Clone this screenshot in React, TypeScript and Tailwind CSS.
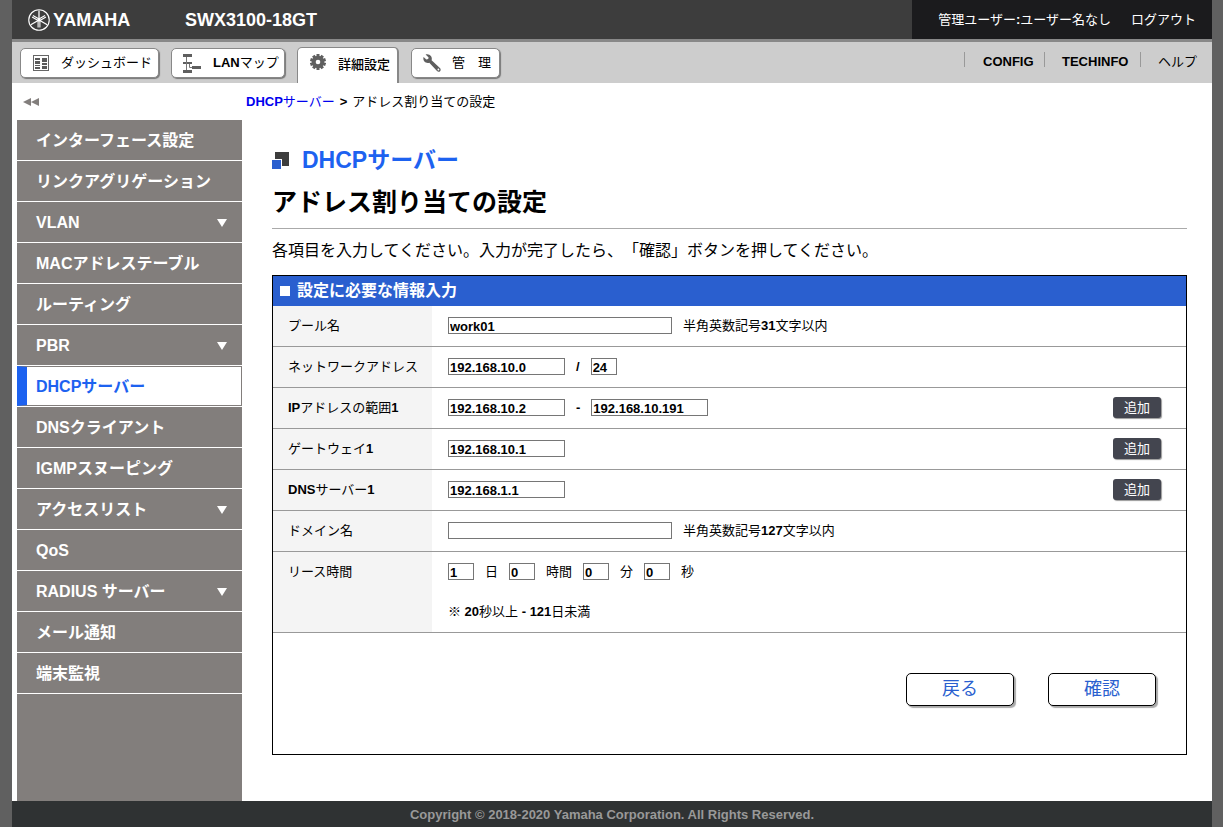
import type { ReactNode } from "react";

const menu = [
  { label: "インターフェース設定" },
  { label: "リンクアグリゲーション" },
  { label: "VLAN", sub: true },
  { label: "MACアドレステーブル" },
  { label: "ルーティング" },
  { label: "PBR", sub: true },
  { label: "DHCPサーバー", active: true },
  { label: "DNSクライアント" },
  { label: "IGMPスヌーピング" },
  { label: "アクセスリスト", sub: true },
  { label: "QoS" },
  { label: "RADIUS サーバー", sub: true },
  { label: "メール通知" },
  { label: "端末監視" },
];

function LogoMark() {
  return (
    <svg viewBox="0 0 44 44" className="size-[22px]" fill="none" stroke="#fff" aria-hidden="true">
      <circle cx="22" cy="22" r="20.5" strokeWidth="2.2" />
      {[0, 120, 240].map((angle) => (
        <g key={angle} transform={`rotate(${angle} 22 22)`}>
          <path d="M22 3v19" strokeWidth="2.6" />
          <path d="M20.2 22v15M23.8 22v15" strokeWidth="2.2" />
        </g>
      ))}
      <circle cx="22" cy="22" r="3.2" fill="#fff" stroke="none" />
    </svg>
  );
}

function DashboardIcon() {
  return (
    <svg viewBox="0 0 16 16" className="size-4" aria-hidden="true">
      <rect x="0.5" y="0.5" width="15" height="15" fill="#fff" stroke="#666" />
      <path
        fill="#5a5a5a"
        d="M2 3h5v2H2zM2 6h5v3H2zM2 10h5v1H2zM2 12h5v2H2zM9 3h5v4H9zM9 8h5v2H9zM9 11h5v3H9z"
      />
    </svg>
  );
}

function LanMapIcon() {
  return (
    <svg viewBox="0 0 18 19" className="h-[19px] w-[18px]" aria-hidden="true">
      <path fill="#5f5f5f" d="M0 0h9v3H0zM0 8h9v2H0zM0 16h9v3H0zM9 12h9v3H9z" />
      <path d="M3.5 3v13M6.5 10v3.5H9" fill="none" stroke="#777" />
    </svg>
  );
}

function GearIcon() {
  return (
    <svg viewBox="0 0 16 16" className="mb-[5px] size-4" aria-hidden="true">
      {[0, 36, 72, 108, 144].map((angle) => (
        <rect
          key={angle}
          x="6.5"
          width="3"
          height="16"
          fill="#5f5f5f"
          transform={`rotate(${angle} 8 8)`}
        />
      ))}
      <circle cx="8" cy="8" r="6.2" fill="#5f5f5f" />
      <circle cx="8" cy="8" r="2.3" fill="#fff" />
    </svg>
  );
}

function WrenchIcon() {
  return (
    <svg viewBox="0 0 18 18" className="size-[18px]" aria-hidden="true">
      <path
        fill="#5f5f5f"
        d="M2.600.6C4.500-.1 7 .6 8.100 2.300c.8 1.300.9 2.700.5 3.900l8.300 7.900c1 1 1 2.300.2 3.100s-2.200.8-3.100-.2L6.300 8.700C4.400 9.300 2.400 8.700 1.200 7.200.3 6 .1 4.400.6 2.900l2.700 2.700 1.900-.6.4-1.600z"
      />
      <circle cx="15.400" cy="15.500" r="0.9" fill="#fff" />
    </svg>
  );
}

const tabBase = "flex items-center border-[#888] bg-white whitespace-nowrap";
const tabBox = "mb-[5px] h-[30px] rounded-[5px] border shadow-[1px_1px_1px_#777]";

function Tab({ icon, className, children }: { icon: ReactNode; className: string; children: ReactNode }) {
  return (
    <a href="#" className={`${tabBase} ${className}`}>
      {icon}
      <span>{children}</span>
    </a>
  );
}

function Header() {
  return (
    <header className="flex h-[42px] justify-between border-b-[3px] border-[#888] bg-[#3d3d3d] text-white">
      <div className="flex items-center pl-4">
        <a href="#" className="flex w-[157px] items-center gap-[3px]">
          <LogoMark />
          <span className="text-lg font-bold">YAMAHA</span>
        </a>
        <span className="text-lg font-bold">SWX3100-18GT</span>
      </div>
      <div className="flex items-center gap-5 bg-[#1b1b1d] pr-4 pl-[26px] whitespace-nowrap">
        <span>
          管理ユーザー<b>:</b>ユーザー名なし
        </span>
        <a href="#">ログアウト</a>
      </div>
    </header>
  );
}

function TabBar() {
  return (
    <nav className="flex h-[41px] justify-between bg-[#cdcdcd]">
      <div className="flex items-end gap-3 pl-2">
        <Tab icon={<DashboardIcon />} className={`${tabBox} w-[139px] gap-3 pl-3`}>
          ダッシュボード
        </Tab>
        <Tab icon={<LanMapIcon />} className={`${tabBox} w-[114px] gap-3 pl-[11px]`}>
          <b>LAN</b>マップ
        </Tab>
        <Tab
          icon={<GearIcon />}
          className="h-9 w-[102px] gap-3 rounded-t-[5px] border-t border-r-2 border-l pb-[2px] pl-3 font-medium"
        >
          詳細設定
        </Tab>
        <Tab icon={<WrenchIcon />} className={`${tabBox} w-[89px] gap-[11px] pl-[11px]`}>
          管　理
        </Tab>
      </div>
      <ul className="mt-[10px] flex h-[15px] font-bold">
        <li className="flex w-20 border-l border-[#999] pl-[18px]">
          <a href="#">CONFIG</a>
        </li>
        <li className="flex w-24 border-l border-[#999] pl-[17px]">
          <a href="#">TECHINFO</a>
        </li>
        <li className="flex w-[72px] border-l border-[#999] pl-[17px] font-normal">
          <a href="#">ヘルプ</a>
        </li>
      </ul>
    </nav>
  );
}

function Sidebar() {
  return (
    <aside className="flex w-[230px] shrink-0 flex-col pl-[5px]">
      <button type="button" aria-label="メニューを閉じる" className="flex h-[37px] items-center pl-[6px]">
        <svg viewBox="0 0 16 8" className="h-2 w-4" fill="#827e7c" aria-hidden="true">
          <path d="M8 0v8L0 4zM16 0v8L8 4z" />
        </svg>
      </button>
      <ul className="grow bg-[#827e7c] text-base font-bold text-white">
        {menu.map((item) => (
          <li key={item.label} className="border-b border-white">
            <a
              href="#"
              className={
                item.active
                  ? "flex h-10 items-center border border-l-[10px] border-[#827e7c] border-l-[#1d62f0] bg-white pt-[2px] pl-[9px] text-[#1d62f0]"
                  : "flex h-10 items-center justify-between pt-[2px] pr-[15px] pl-[19px]"
              }
            >
              {item.label}
              {item.sub && (
                <svg viewBox="0 0 10 8" className="h-2 w-[10px]" fill="#fff" aria-hidden="true">
                  <path d="M0 0h10L5 8z" />
                </svg>
              )}
            </a>
          </li>
        ))}
      </ul>
    </aside>
  );
}

function Field({ id, value, label, size = "w-[117px]" }: { id: string; value: string; label?: string; size?: string }) {
  return (
    <input
      id={id}
      type="text"
      defaultValue={value}
      aria-label={label}
      className={`${size} h-[17px] border border-[#767676] bg-white pt-[2px] pl-px font-bold`}
    />
  );
}

type RowProps = { id: string; label: ReactNode; add?: boolean; note?: ReactNode; children: ReactNode };

function Row({ id, label, add, note, children }: RowProps) {
  return (
    <tr className="border-b border-[#999] align-top">
      <th scope="row" className="w-[159px] bg-[#f4f4f4] pl-[15px] text-left font-normal">
        <label htmlFor={id} className="flex h-10 items-center">
          <span>{label}</span>
        </label>
      </th>
      <td className="pl-4">
        <div className="flex h-10 items-center gap-[11px] pb-px">{children}</div>
        {note && <p className="h-10 pt-[10px]">{note}</p>}
      </td>
      <td className="w-[73px]">
        {add && (
          <div className="flex h-10 items-center pb-px">
            <button
              type="button"
              className="h-[21px] w-12 rounded-[3px] bg-[#43454f] text-white shadow-[1px_1px_1px_#999]"
            >
              追加
            </button>
          </div>
        )}
      </td>
    </tr>
  );
}

const actionButton =
  "h-[33px] w-[108px] rounded-[5px] border border-black bg-white pb-[2px] text-lg text-[#2a5fcf] shadow-[2px_2px_1px_#aaa]";

function SettingsForm() {
  return (
    <form className="mt-3 border border-black" onSubmit={(e) => e.preventDefault()}>
      <h3 className="flex h-[30px] items-center gap-[7px] bg-[#2a5fcf] pl-[7px] text-base font-bold text-white">
        <span className="size-[10px] bg-white" />
        設定に必要な情報入力
      </h3>
      <table className="w-full border-collapse">
        <tbody>
          <Row id="pool" label="プール名">
            <Field id="pool" value="work01" size="w-[224px]" />
            <span>
              半角英数記号<b>31</b>文字以内
            </span>
          </Row>
          <Row id="network" label="ネットワークアドレス">
            <Field id="network" value="192.168.10.0" />
            <b>/</b>
            <Field id="mask" value="24" label="マスク長" size="w-[26px]" />
          </Row>
          <Row id="range-from" label={<><b>IP</b>アドレスの範囲<b>1</b></>} add>
            <Field id="range-from" value="192.168.10.2" />
            <b>-</b>
            <Field id="range-to" value="192.168.10.191" label="範囲の終了アドレス" />
          </Row>
          <Row id="gateway" label={<>ゲートウェイ<b>1</b></>} add>
            <Field id="gateway" value="192.168.10.1" />
          </Row>
          <Row id="dns" label={<><b>DNS</b>サーバー<b>1</b></>} add>
            <Field id="dns" value="192.168.1.1" />
          </Row>
          <Row id="domain" label="ドメイン名">
            <Field id="domain" value="" size="w-[224px]" />
            <span>
              半角英数記号<b>127</b>文字以内
            </span>
          </Row>
          <Row
            id="lease-day"
            label="リース時間"
            note={<><b>※ 20</b>秒以上 <b>- 121</b>日未満</>}
          >
            <Field id="lease-day" value="1" size="w-[26px]" />
            日
            <Field id="lease-hour" value="0" label="時間" size="w-[26px]" />
            時間
            <Field id="lease-minute" value="0" label="分" size="w-[26px]" />
            分
            <Field id="lease-second" value="0" label="秒" size="w-[26px]" />
            秒
          </Row>
        </tbody>
      </table>
      <div className="flex justify-end gap-[34px] pt-10 pr-[30px] pb-12">
        <button type="button" className={actionButton}>戻る</button>
        <button type="submit" className={actionButton}>確認</button>
      </div>
    </form>
  );
}

export default function App() {
  return (
    <div className="min-h-screen bg-[#606060] pr-[11px] pl-3 font-['Liberation_Sans','Noto_Sans_CJK_JP',sans-serif] text-[13px] leading-5 text-black" lang="ja">
      <div className="flex min-h-screen flex-col bg-white">
        <Header />
        <TabBar />
        <div className="flex grow">
          <Sidebar />
          <main className="grow pb-[46px]">
            <p className="flex h-[37px] items-center gap-[5px] pl-1">
              <a href="#" className="text-[#0000ee]">
                <b>DHCP</b>サーバー
              </a>
              <b>&gt;</b>
              <span>アドレス割り当ての設定</span>
            </p>
            <div className="mt-5 pr-[25px] pl-[30px]">
              <h1 className="flex h-10 items-center gap-[13px] text-[23px] font-bold text-[#1d62f0]">
                <svg viewBox="0 0 17 17" className="size-[17px]" aria-hidden="true">
                  <path fill="#3d3d3d" d="M3 0h14v14H3z" />
                  <path fill="#fff" d="M0 7h10v10H0z" />
                  <path fill="#2a5fcf" d="M0 8h9v9H0z" />
                </svg>
                <span>DHCPサーバー</span>
              </h1>
              <h2 className="flex h-[49px] items-center border-b border-[#aaa] pb-1 text-[25px] leading-8 font-bold">
                アドレス割り当ての設定
              </h2>
              <p className="mt-[10px] text-base leading-6 [text-spacing-trim:space-all]">
                各項目を入力してください。入力が完了したら、「確認」ボタンを押してください。
              </p>
              <SettingsForm />
            </div>
          </main>
        </div>
        <footer className="h-[26px] bg-[#2f3233] pt-[4px] text-center font-bold text-[#999]">
          Copyright © 2018-2020 Yamaha Corporation. All Rights Reserved.
        </footer>
      </div>
    </div>
  );
}
